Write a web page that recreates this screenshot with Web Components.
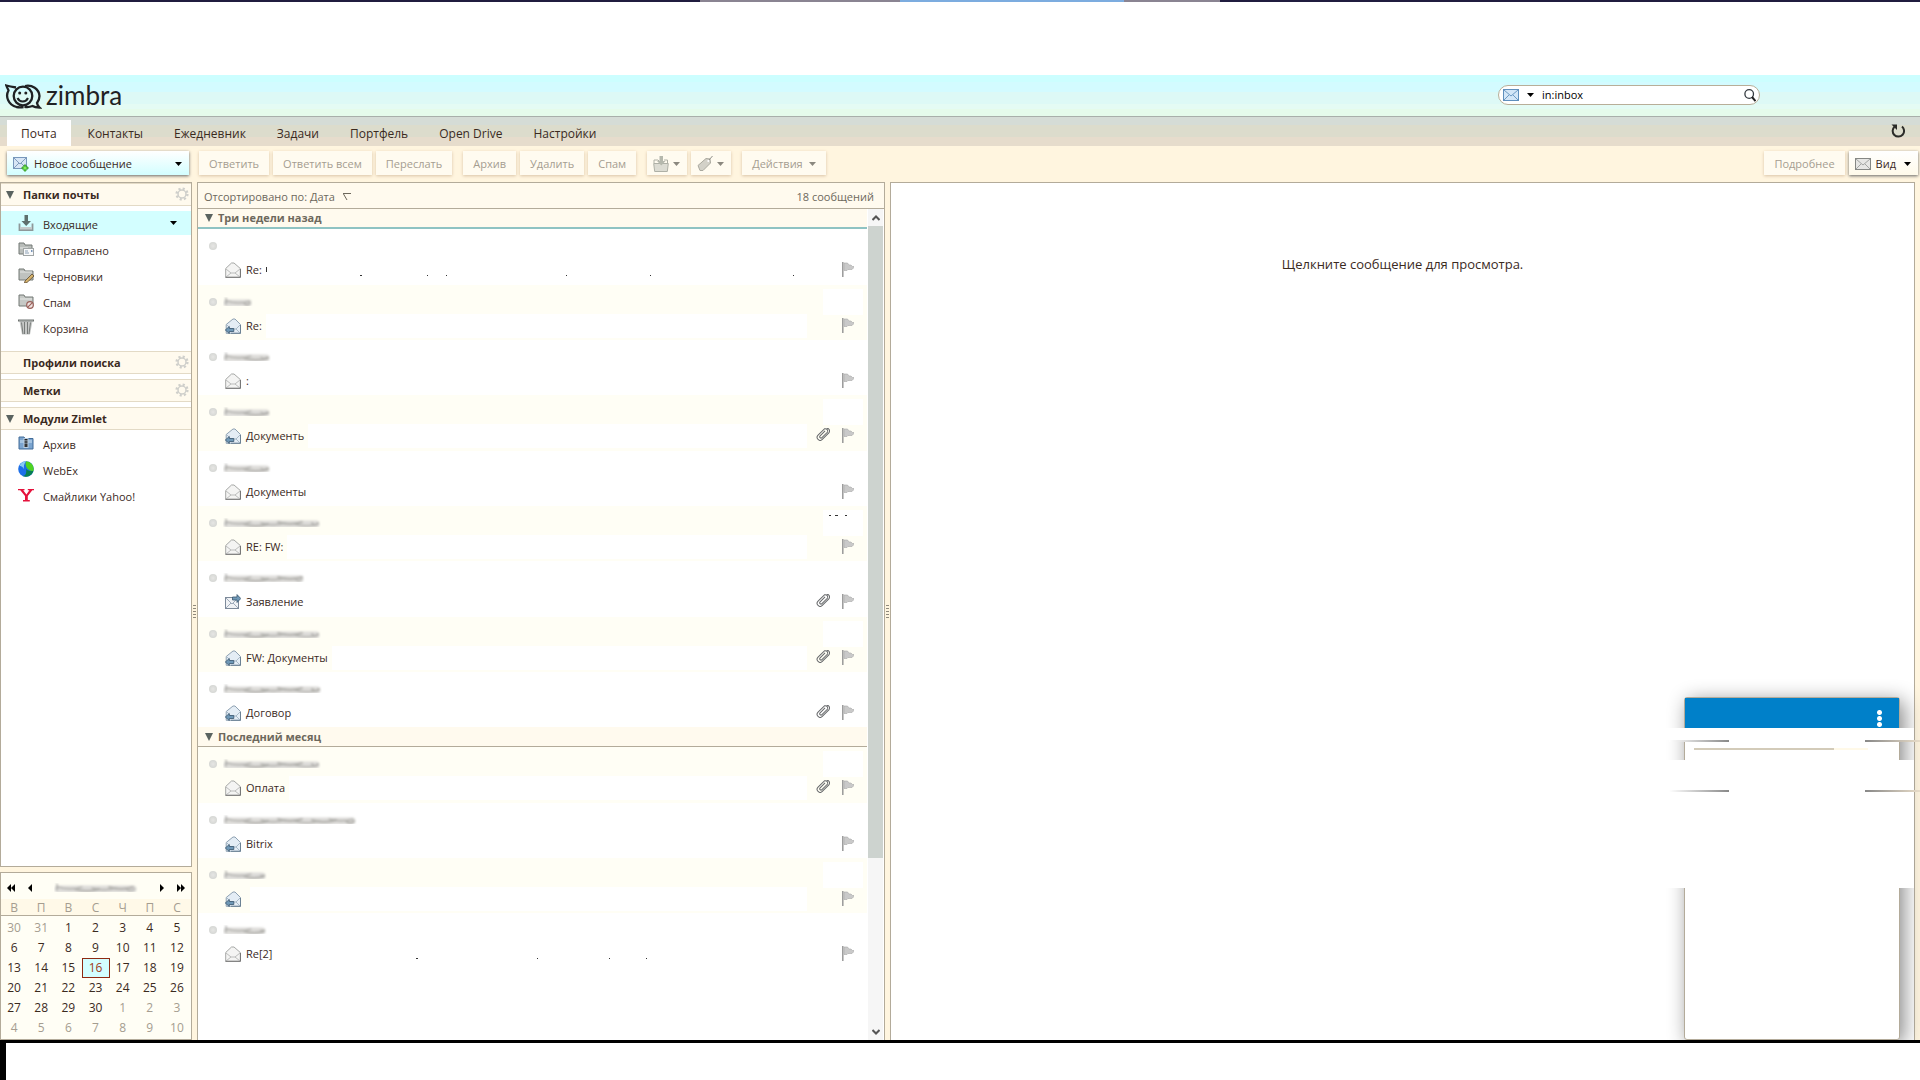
<!DOCTYPE html>
<html lang="ru">
<head>
<meta charset="utf-8">
<title>Zimbra: Входящие</title>
<style>
html, body { margin: 0; }
body {
  font-family: "Open Sans", "Noto Sans", sans-serif;
  font-size: 11px; line-height: 16px; color: #3b2a1e; background: #fff;
  --line: #b3ab9a; --cream: #fff5df; --ivory: #fffaee; --stripe: #fffef5; --cyan: #d3feff; --mute: #a59d90;
}
</style>
</head>
<body>
<zm-app></zm-app>
<script>
const ICONS = {
  mail: ['0 0 16 12', '<rect x=".5" y=".5" width="15" height="11" fill="#d3e6f7" stroke="#5f8fbd"/><path d="M1 1l7 6 7-6M1 11l5-5M15 11l-5-5" fill="none" stroke="#6d9ac4"/>'],
  mailgray: ['0 0 16 12', '<rect x=".5" y=".5" width="15" height="11" fill="#e6e6e4" stroke="#858784"/><path d="M1 1l7 6 7-6M1 11l5-5M15 11l-5-5" fill="none" stroke="#a3a5a3"/>'],
  compose: ['0 0 16 16', '<rect x=".5" y="1.5" width="13" height="11" fill="#d7e6f5" stroke="#7797bb"/><path d="M1 2l6 6 6-6M1 12l5-5M13 12L8 7" fill="none" stroke="#7f9dbd"/><path d="M9 11h2V9h2v2h2v2h-2v2h-2v-2H9z" fill="#7df05a" stroke="#2a8f1f" stroke-width=".8"/>'],
  open: ['0 0 16 16', '<path d="M.7 6.500L6.500 1h2.500l6.300 5.500v8.800H.7z" fill="#f4f4f3" stroke="#a5a7a5"/><path d="M1 7l5 4h4l5-4M1 15l5-4M15 15l-5-4" fill="none" stroke="#bcbdbc"/><path d="M.5 15.300h15V7" fill="none" stroke="#777"/>'],
  reply: ['0 0 16 16', '<path d="M1.200 6.500L8 1h2l5.500 5.500v8.800H1.200z" fill="#e4edf5" stroke="#8ea1b2"/><path d="M2 7l4 4h5l4-4M15 15l-4-4" fill="none" stroke="#a9bac8"/><path d="M6 15.300h9.500V7" fill="none" stroke="#6b8194"/><path d="M.3 12l4-3.500v2h4.500v3H4.300v2z" fill="#6f98b7" stroke="#38566d" stroke-width=".8"/>'],
  forward: ['0 0 16 16', '<rect x=".5" y="3.500" width="13" height="11" fill="#f0f2f5" stroke="#7d8a9a"/><path d="M1 4l6 6 6-6M1 14l5-5M13 14L8 9" fill="none" stroke="#9fabba"/><path d="M15.800 4.500L12 .6V3H7.500v3H12v2.500z" fill="#6f98b7" stroke="#38566d" stroke-width=".8"/>'],
  flag: ['0 0 12 16', '<path d="M.8 0v15" stroke="#999" stroke-width="1.500"/><path d="M2 1h3.500l1.500 2h2l1.500 1.500h1.500v1L10 7.500H6L5 8.500H2z" fill="#c9c9c9" stroke="#a9a9a9" stroke-width=".6"/>'],
  clip: ['0 0 14 13', '<g transform="rotate(-45 7 6.500)" fill="none" stroke="#66686a" stroke-width="1"><path d="M13 9.500H3a3 3 0 0 1 0-6h9a2.500 2.500 0 0 1 0 4.500H4a1.300 1.300 0 0 1 0-2.600h7"/><path d="M13 9.500a3 3 0 0 0 1-5"/></g>'],
  inbox: ['0 0 16 16', '<path d="M1.500 8.500v6.500h13V8.500" fill="none" stroke="#8e9899" stroke-width="1.800"/><path d="M2 12h12v2.500H2z" fill="#c5cbcb"/><path d="M6.500 0h3.500v6H13l-4.800 5L3.500 6h3z" fill="#5e6f6d"/>'],
  sent: ['0 0 16 16', '<path d="M1 2h5l1 2h7v9H1z" fill="#b9bdba" stroke="#737874"/><path d="M2 7h8" stroke="#e9ebea"/><rect x="5.500" y="7.500" width="10" height="7" fill="#f8f9fa" stroke="#a0a5a5"/><path d="M7 10h3M7 12h4" stroke="#8ca0b5"/><path d="M13 9h1.500v2H13z" fill="#7894b8"/>'],
  drafts: ['0 0 16 16', '<path d="M1 2h5l1 2h8v9H1z" fill="#bfc2bf" stroke="#737874"/><path d="M2 5h12" stroke="#e4e6e4"/><path d="M7 14l7-7 2 2-7 6.500-2.500.5z" fill="#d5b36c" stroke="#5e4a30" stroke-width=".8"/>'],
  junk: ['0 0 16 16', '<path d="M1 2h5l1 2h8v9H1z" fill="#c6c9c6" stroke="#737874"/><path d="M2 6h12" stroke="#e4e6e4"/><circle cx="12" cy="12" r="3.300" fill="#eee3e1" stroke="#99605a" stroke-width="1.200"/><path d="M9.800 14.200l4.400-4.400" stroke="#99605a" stroke-width="1.200"/>'],
  trash: ['0 0 16 16', '<path d="M1.500 2.500L4 15.500h8l2.500-13z" fill="#c6c8c7"/><path d="M3.500 3.500L5 15M6.500 3v12M9.500 3v12M12.500 3.500L11 15" stroke="#777b79"/><path d="M0 1.500h16" stroke="#6d7270" stroke-width="2"/><path d="M1 1h14" stroke="#b6b9b8"/>'],
  archive: ['0 0 16 16', '<path d="M1 2h5l1 1.500h8V14H1z" fill="#7ba4cf" stroke="#426c99"/><path d="M2 5h12v3H2z" fill="#a5c4e2"/><rect x="5.500" y="3" width="5" height="10" fill="#b9cde0"/><path d="M8 4v5" stroke="#222" stroke-width="3" stroke-dasharray="1.500 .7"/><path d="M6.500 9h3v3h-3z" fill="#333"/>'],
  webex: ['0 0 16 16', '<circle cx="8" cy="8" r="7.800" fill="#1d6fe8"/><path d="M8 .2a7.800 7.800 0 0 1 7.500 9.600C12 11 6 7 8 .2z" fill="#4fd321"/><path d="M15.500 9.800A7.800 7.800 0 0 1 4.500 15C7 15 9 13 8 8c2 2 5 2.500 7.500 1.800z" fill="#087f50"/><path d="M1.500 5C2.500 2 5 .5 8 .3 6 3 5.500 6 6 8 4 5 3 5 1.500 5z" fill="#87ccf6"/>'],
  yahoo: ['0 0 16 14', '<path d="M0 1h6.500v1.200H5.200L8.400 6.500l3-4.300h-1.600V1H16v1.200h-1.700L9.800 8v4h2v1.500H5V12h2V8L2.300 2.200H0z" fill="#e5123c"/>'],
  gear: ['0 0 14 14', '<circle cx="7" cy="7" r="5.400" fill="none" stroke="#cfcfcb" stroke-width="2.400" stroke-dasharray="2.120 2.120"/><circle cx="7" cy="7" r="4" fill="#fffaee" stroke="#cfcfcb" stroke-width="1.500"/>'],
  search: ['0 0 12 13', '<circle cx="5.200" cy="5" r="4.300" fill="none" stroke="#333a40" stroke-width="1.300"/><path d="M8 8l3.500 4.200" stroke="#222" stroke-width="2"/>'],
  refresh: ['0 0 14 14', '<path d="M11 2.500a5.700 5.700 0 1 1-7.500.2" fill="none" stroke="#2b2b28" stroke-width="2"/><path d="M.5 .5h5.500v5.500z" fill="#2b2b28"/>'],
  down: ['0 0 7 4', '<path d="M0 0h7L3.500 4z" fill="currentColor"/>'],
  tri: ['0 0 8 8', '<path d="M0 0h8L4 8z" fill="#5a6360"/>'],
  sort: ['0 0 8 7', '<path d="M0 .5h8M.5 1l3.500 6" fill="none" stroke="#6d685c"/>'],
  tray: ['0 0 16 16', '<path d="M.7 7.500h14.600l-1 8H1.700z" fill="#dcdcd3" stroke="#aeb0a6"/><path d="M1 7V4h4l1 1M11 4h3.500v3" fill="none" stroke="#aeb0a6"/><path d="M6.500 0h3.500v5h2.500L8.300 9.500 4 5h2.500z" fill="#b5b8ad"/>'],
  tag: ['0 0 16 15', '<path d="M1 9.500L9 2.500l4 .5.5 4L6 14.500H3z" fill="#d3d1c8" stroke="#a9a89e"/><path d="M12 4l3.500-4" stroke="#8f8f88"/><circle cx="11.300" cy="5" r="1" fill="#fff"/>'],
  first: ['0 0 8 8', '<path d="M4 0v8L0 4zM8 0v8L4 4z" fill="#000"/>'],
  prev: ['0 0 4 8', '<path d="M4 0v8L0 4z" fill="#000"/>'],
  next: ['0 0 4 8', '<path d="M0 0v8l4-4z" fill="#000"/>'],
  last: ['0 0 8 8', '<path d="M0 0v8l4-4zM4 0v8l4-4z" fill="#000"/>'],
  up: ['0 0 8 6', '<path d="M.5 5L4 1.500 7.500 5" fill="none" stroke="#555" stroke-width="2"/>'],
  dn: ['0 0 8 6', '<path d="M.5 1L4 4.500 7.500 1" fill="none" stroke="#555" stroke-width="2"/>'],
  face: ['0 0 37 25', '<g fill="none" stroke="#1f2124" stroke-width="2.300"><path d="M11 3.500C8 3 5 2.500 1.300 1.500c1 3 2 4 2.200 5-3.500 6 0 14.500 8 16.500 2.500.5 5 .4 7 0"/><circle cx="18" cy="12" r="9.300"/><path d="M20 2c7-1.500 14 3 14.500 10 0 3-1 5-2.500 7 .3 2 1 3 2.500 4.500-3 0-5.500-.5-7-1.500-2.500 1-5.500 1.300-8 .8"/><path d="M12.500 14c2 4.500 8.500 4.500 10.500 0" stroke-width="2"/></g><circle cx="14.700" cy="9" r="1.500" fill="#1f2124"/><circle cx="20.800" cy="9" r="1.500" fill="#1f2124"/>'],
};

/* Registers a component whose shadow root is built from its attributes. */
function define(name, render) {
  customElements.define(name, class extends HTMLElement {
    constructor() { super(); this.attachShadow({ mode: 'open' }); }
    connectedCallback() {
      this.shadowRoot.innerHTML = render(k => this.getAttribute(k) || '', this);
    }
  });
}
const reset = `button,input{font:inherit;color:inherit;background:none;border:0;margin:0;padding:0;outline:0}a{color:inherit;text-decoration:none}`;

define('zm-icon', a => {
  const [box, body] = ICONS[a('name')];
  const [, , w, h] = box.split(' ');
  return `<style>:host{display:inline-flex;flex:none}svg{display:block}</style>
  <svg viewBox="${box}" width="${w}" height="${h}" aria-hidden="true">${body}</svg>`;
});

/* Rubbed-out text: a few grey soft strokes. */
define('zm-smudge', a => {
  const w = +a('w'), n = Math.ceil(w / 17);
  let p = '';
  for (let i = 0; i < n; i++) {
    const x = 4 + i * 17, e = Math.min(w - 3, x + 24), y = 6 + (i * 5 % 3);
    p += `<path d="M${x} ${y}Q${(x + e) / 2} ${y + 4} ${e} ${y}" stroke-width="${1 + i % 2}" stroke="${i % 2 ? '#b0afab' : '#9c9b97'}"/>`;
  }
  return `<style>:host{display:block;flex:none}svg{display:block}</style>
  <svg width="${w}" height="14" fill="none" stroke-linecap="round" aria-hidden="true"><defs><filter id="f"><feGaussianBlur stdDeviation="1"/></filter></defs>
  <g filter="url(#f)"><path d="M4 8H${w - 5}" stroke="#dddcd9" stroke-width="7"/>${p}<path d="M3 3v6" stroke="#888" stroke-width="1"/></g></svg>`;
});

define('zm-button', a => `<style>${reset}
  :host{display:block;flex:none}
  button{display:flex;align-items:center;height:24px;box-sizing:border-box;width:100%;padding:1px 10px 0;background:#fffbf0;box-shadow:0 1px 3px #d9c3a6;color:var(--mute);white-space:nowrap;gap:6px}
  :host([kind=primary]) button{background:linear-gradient(#fff,#d3feff);box-shadow:0 1px 3px #666;color:#3b2a1e;padding:1px 7px 0 6px;justify-content:space-between}
  :host([kind=view]) button{background:linear-gradient(#fff,#fffaea);box-shadow:0 1px 3px #666;color:#3b2a1e;padding:1px 7px 0 6px;gap:8px}
  :host([kind=icon]) button{padding:1px 7px 0 6px;gap:4px}
  .l{display:flex;align-items:center;gap:5px}
  .d{color:#8b887f}
  :host([kind=primary]) .d,:host([kind=view]) .d{color:#000}
  </style><button type="button" aria-label="${a('label')}"><span class="l">${a('icon') ? `<zm-icon name="${a('icon')}"></zm-icon>` : ''}<slot></slot></span>${a('menu') ? '<zm-icon class="d" name="down"></zm-icon>' : ''}</button>`);

define('zm-header', () => `<style>${reset}
  :host{display:flex;align-items:center;height:41px;border-bottom:1px solid #a9afaa;
    background:linear-gradient(#ccfeff 0 7px,#d3fbff 7px 17px,#ddf9f6 17px 29px,#e4fbf4 29px 34px,#e5fbeb 34px)}
  .logo{display:flex;align-items:center;gap:4px;padding:2px 5px 0;font:26px/30px Lato,"Open Sans",sans-serif;color:#1f2124}
  .logo span{padding-bottom:3px}
  .search{display:flex;align-items:center;box-sizing:border-box;width:262px;height:20px;margin-left:auto;margin-right:160px;margin-bottom:1px;padding:0 3px 0 4px;border:1px solid #b8ae98;border-radius:10px;background:#fff;color:#000}
  .search zm-icon+zm-icon{margin:0 8px}
  input{flex:1;min-width:0}
  </style>
  <a class="logo" href="#"><zm-icon name="face"></zm-icon><span>zimbra</span></a>
  <label class="search"><zm-icon name="mail"></zm-icon><zm-icon name="down"></zm-icon><input type="text" value="in:inbox" aria-label="Поиск"><zm-icon name="search"></zm-icon></label>`);

define('zm-tabs', a => `<style>${reset}
  :host{display:flex;align-items:flex-end;height:29px;padding:0 15px 0 7px;background:linear-gradient(#d5dcd6 0 8px,#dcdccc 8px 20px,#e6dccc 20px)}
  nav{display:flex;gap:3px;flex:1}
  nav a{padding:0 14px;height:26px;line-height:27px;font-size:12px}
  a.on{background:#fff}
  button{align-self:center;padding-top:3px}
  </style><nav>${a('items').split('|').map((t, i) => `<a href="#"${i ? '' : ' class="on"'}>${t}</a>`).join('')}</nav>
  <button type="button" aria-label="Обновить"><zm-icon name="refresh"></zm-icon></button>`);

define('zm-toolbar', () => `<style>
  :host{display:flex;align-items:flex-start;height:31px;padding:5px 2px 0 7px;gap:4px;background:var(--cream)}
  .new{width:182px;margin-right:6px}.g{margin-left:7px}.push{margin-left:auto}
  </style>
  <zm-button class="new" kind="primary" icon="compose" menu="1">Новое сообщение</zm-button>
  <zm-button>Ответить</zm-button><zm-button>Ответить всем</zm-button><zm-button>Переслать</zm-button>
  <zm-button class="g">Архив</zm-button><zm-button>Удалить</zm-button><zm-button>Спам</zm-button>
  <zm-button class="g" kind="icon" icon="tray" menu="1" label="Переместить"></zm-button><zm-button kind="icon" icon="tag" menu="1" label="Метка"></zm-button>
  <zm-button class="g" menu="1">Действия</zm-button>
  <zm-button class="push">Подробнее</zm-button><zm-button kind="view" icon="mailgray" menu="1">Вид</zm-button>`);

define('zm-section', a => `<style>${reset}
  :host{display:block;margin-bottom:5px}
  h2{display:flex;align-items:center;box-sizing:border-box;height:23px;margin:0;padding:0 2px 0 5px;font-size:11px;line-height:16px;font-weight:700;background:var(--ivory);border-top:1px solid #e3dac6;border-bottom:1px solid #e3dac6}
  h2 .t{width:17px;display:flex}h2 .n{flex:1}
  button{display:flex;margin-bottom:2px}
  ul{list-style:none;margin:0;padding:0;display:flex;flex-direction:column;gap:2px}
  :host([list]) ul{padding:1px 0 7px}
  :host([first]) ul{padding:5px 0 7px}
  </style><h2><span class="t">${a('open') ? '<zm-icon name="tri"></zm-icon>' : ''}</span><span class="n">${a('label')}</span>${a('gear') ? '<button type="button" aria-label="Настроить"><zm-icon name="gear"></zm-icon></button>' : ''}</h2><ul><slot></slot></ul>`);

define('zm-folder', a => `<style>${reset}
  :host{display:block}
  li{display:flex;align-items:center;height:24px;padding:0 14px 0 17px;gap:9px}
  li a{flex:1;padding-top:3px}
  :host([on]) li{background:var(--cyan)}:host([on]) zm-icon:last-child{color:#000}
  </style><li><zm-icon name="${a('icon')}"></zm-icon><a href="#"><slot></slot></a>${a('on') ? '<zm-icon name="down"></zm-icon>' : ''}</li>`);

define('zm-calendar', () => {
  const days = [30, 31, ...Array.from({ length: 30 }, (_, i) => i + 1), 1, 2, 3, 4, 5, 6, 7, 8, 9, 10];
  let rows = '';
  for (let r = 0; r < 6; r++) rows += '<tr>' + days.slice(r * 7, r * 7 + 7).map((d, c) => {
    const i = r * 7 + c, out = i < 2 || i > 31;
    return `<td class="${out ? 'out' : ''}${!out && d === 16 ? ' now' : ''}">${d}</td>`;
  }).join('') + '</tr>';
  return `<style>${reset}
  :host{display:block;border:1px solid var(--line);background:var(--stripe);height:166px;overflow:hidden;font-size:12px}
  .nav{display:flex;align-items:center;justify-content:space-between;height:26px;padding:4px 6px 0 6px;box-sizing:border-box}
  .nav div{display:flex;gap:13px}button{display:flex}
  table{border-collapse:collapse;width:100%;table-layout:fixed;text-align:center}
  th{height:16px;padding:0 1px 0 0;font-weight:400;color:var(--mute);background:#fff9e8;border-bottom:1px solid var(--line);line-height:15px}
  td{height:20px;padding:0 1px 0 0;line-height:18px;box-sizing:border-box}
  tbody tr:first-child td{height:22px;padding-top:2px}
  .out{color:var(--mute)}
  .now{background:var(--cyan);color:#a03a20;outline:1px solid #8f2a12;outline-offset:-1px}
  </style><div class="nav"><div><button type="button" aria-label="Год назад"><zm-icon name="first"></zm-icon></button><button type="button" aria-label="Месяц назад"><zm-icon name="prev"></zm-icon></button></div><zm-smudge w="84"></zm-smudge><div><button type="button" aria-label="Месяц вперёд"><zm-icon name="next"></zm-icon></button><button type="button" aria-label="Год вперёд"><zm-icon name="last"></zm-icon></button></div></div>
  <table><thead><tr>${'ВПВСЧПС'.split('').map(d => `<th>${d}</th>`).join('')}</tr></thead><tbody>${rows}</tbody></table>`;
});

define('zm-sidebar', () => `<style>
  :host{display:flex;flex-direction:column;flex:none;width:192px;gap:5px}
  .tree{flex:1;border:1px solid var(--line);background:#fff}
  </style><div class="tree">
  <zm-section label="Папки почты" open="1" gear="1" list first>
    <zm-folder icon="inbox" on="1">Входящие</zm-folder><zm-folder icon="sent">Отправлено</zm-folder><zm-folder icon="drafts">Черновики</zm-folder><zm-folder icon="junk">Спам</zm-folder><zm-folder icon="trash">Корзина</zm-folder>
  </zm-section>
  <zm-section label="Профили поиска" gear="1"></zm-section>
  <zm-section label="Метки" gear="1"></zm-section>
  <zm-section label="Модули Zimlet" open="1" list>
    <zm-folder icon="archive">Архив</zm-folder><zm-folder icon="webex">WebEx</zm-folder><zm-folder icon="yahoo">Смайлики Yahoo!</zm-folder>
  </zm-section></div><zm-calendar></zm-calendar>`);

define('zm-sash', () => `<style>:host{display:flex;flex:none;width:5px;align-items:center;justify-content:center}
  i{width:3px;height:13px;background:repeating-linear-gradient(#8f897c 0 1px,transparent 1px 3px)}</style><i></i>`);

define('zm-group', a => `<style>:host{display:flex;align-items:center;gap:5px;box-sizing:border-box;height:20px;padding-left:7px;background:var(--ivory);border-bottom:1px solid var(--line);color:#6d685c;font-weight:700}
  :host([focus]){border-bottom:2px solid #8fc3c3}
  </style><zm-icon name="tri"></zm-icon><slot></slot>`);

define('zm-message', a => `<style>
  :host{display:flex;flex-direction:column;position:relative;box-sizing:border-box;height:55px;padding:2px 10px 2px 11px}
  :host([tall]){height:56px}
  :host([alt]){background:var(--stripe)}
  .from,.subj{display:flex;align-items:center;height:30px}
  .subj{height:18px;padding-left:16px}
  .dot{width:8px;height:8px;border-radius:4px;background:radial-gradient(#e6e6e4,#cfd1ce);margin-right:6px;flex:none}
  .t{padding:0 4px 0 5px}
  .w{flex:1;align-self:stretch;background:#fff;margin:-3px 0}
  .from .w{flex:none;margin:2px -6px 2px auto;width:40px}
  .r{display:flex;justify-content:flex-end;gap:12px;width:44px;padding-right:3px;padding-left:3px}
  svg{position:absolute;left:0;top:0}
  </style><div class="from"><span class="dot"></span>${a('from') ? `<zm-smudge w="${a('from')}"></zm-smudge>` : ''}<span class="w"></span></div>
  <div class="subj"><zm-icon name="${a('icon')}"></zm-icon><span class="t"><slot></slot></span><span class="w"></span><span class="r">${a('clip') ? '<zm-icon name="clip"></zm-icon>' : ''}<zm-icon name="flag"></zm-icon></span></div>
  ${a('marks') ? `<svg width="660" height="54" aria-hidden="true"><path d="${a('marks')}" stroke="#333" fill="none"/></svg>` : ''}`);

define('zm-list', () => {
  const m = (icon, text, from, o = '') => ({ icon, text, from, o });
  const g1 = [m('open', 'Re:', 0, 'marks="M68.500 38v5M162 46.500h2M229 46.500h1M248 46.500h1M368 46.500h1M452 46.500h1M595 46.500h1"'), m('reply', 'Re:', 30), m('open', ':', 48), m('reply', 'Документь', 48, 'clip="1"'), m('open', 'Документы', 48), m('open', 'RE: FW:', 98, 'marks="M631 9.500h2M637 9.500h3M647 9.500h2"'), m('forward', 'Заявление', 82, 'clip="1"'), m('reply', 'FW: Документы', 98, 'clip="1"'), m('reply', 'Договор', 99, 'clip="1"')];
  const g2 = [m('open', 'Оплата', 98, 'clip="1"'), m('reply', 'Bitrix', 134), m('reply', '', 44), m('open', 'Re[2]', 44, 'marks="M218 45.500h2M339 45.500h1M411 45.500h1M448 45.500h1"')];
  const row = (r, i, k) => `<zm-message icon="${r.icon}" from="${r.from || ''}" ${r.o} ${i % 2 === k ? 'alt' : ''} ${i % 3 ? '' : 'tall'}>${r.text}</zm-message>`;
  return `<style>${reset}
  :host{display:flex;flex-direction:column;flex:none;width:686px;border:1px solid var(--line);border-bottom:0;background:#fff}
  .sort{display:flex;justify-content:space-between;align-items:center;height:26px;padding:2px 10px 0 6px;box-sizing:border-box;background:var(--ivory);color:#6d685c;border-bottom:1px solid var(--line)}
  .sort button{display:flex;align-items:center;gap:8px}
  .body{display:flex;flex:1}
  .rows{flex:1;margin-right:1px}
  .bar{display:flex;flex-direction:column;width:15px;margin-right:1px;background:#f6f6f6}
  .bar b{display:flex;height:17px;align-items:center;justify-content:center}
  .thumb{flex:632;background:#cdd3cf}.rest{flex:165}
  </style><div class="sort"><button type="button">Отсортировано по: Дата <zm-icon name="sort"></zm-icon></button><span>18 сообщений</span></div>
  <div class="body"><div class="rows"><zm-group focus>Три недели назад</zm-group>${g1.map((r, i) => row(r, i, 1)).join('')}<zm-group>Последний месяц</zm-group>${g2.map((r, i) => row(r, i, 0)).join('')}</div>
  <div class="bar"><b><zm-icon name="up"></zm-icon></b><span class="thumb"></span><span class="rest"></span><b><zm-icon name="dn"></zm-icon></b></div></div>`;
});

define('zm-reader', () => `<style>:host{display:block;flex:1;border:1px solid var(--line);border-bottom:0;background:#fff;margin-right:5px}
  p{margin:73px 0 0;text-align:center;font-size:13px}</style><p>Щелкните сообщение для просмотра.</p>`);

/* Floating chat window over the reading pane. */
define('zm-chat', () => `<style>${reset}
  :host{position:absolute;right:20px;bottom:0;width:216px;height:343px;box-sizing:border-box;border:1px solid var(--line);border-radius:3px;background:#fff;box-shadow:4px 4px 20px #888}
  .head{display:flex;justify-content:flex-end;height:30px;background:#0080c9;padding:12px 17px 0 0;box-sizing:border-box}
  .head button{width:5px;height:17px;background:radial-gradient(circle at 2.500px 2.500px,#fff 0 2px,transparent 3px) 0 0/5px 6px}
  .mask{position:absolute;left:-24px;right:-15px;background:#fff}
  .edge{position:absolute;left:-16px;right:-21px;height:2px;background:linear-gradient(90deg,#fff,#888 60px,#fff 60px calc(100% - 55px),#888 calc(100% - 55px),#e8dcc8)}
  .rule{position:absolute;left:9px;top:50px;width:174px;height:2px;background:linear-gradient(90deg,#d3cbb9 140px,#fff9e8 140px)}
  </style><div class="head"><button type="button" aria-label="Меню"></button></div>
  <span class="mask" style="top:30px;height:12px"></span><span class="edge" style="top:42px"></span><span class="rule"></span>
  <span class="mask" style="top:62px;height:128px"></span><span class="edge" style="top:92px"></span>`);

define('zm-app', () => `<style>
  :host{display:flex;flex-direction:column;min-height:100vh}
  .strip{height:2px;margin-bottom:73px;background:linear-gradient(90deg,#201c3f 700px,#8a8492 700px 900px,#7cacdf 900px 1124px,#8a8492 1124px 1220px,#201c3f 1220px)}
  main{display:flex;flex:1;position:relative;background:var(--cream);overflow:hidden}
  footer{height:37px;border-top:3px solid #000;border-left:6px solid #000}
  </style><div class="strip"></div><zm-header></zm-header>
  <zm-tabs items="Почта|Контакты|Ежедневник|Задачи|Портфель|Open Drive|Настройки"></zm-tabs><zm-toolbar></zm-toolbar>
  <main><zm-sidebar></zm-sidebar><zm-sash></zm-sash><zm-list></zm-list><zm-sash></zm-sash><zm-reader></zm-reader><zm-chat></zm-chat></main><footer></footer>`);
</script>
</body>
</html>
